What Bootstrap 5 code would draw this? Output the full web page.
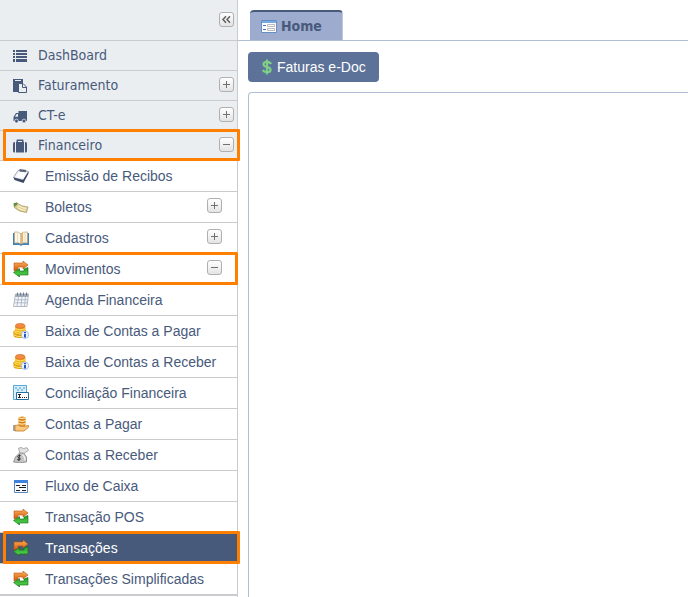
<!DOCTYPE html>
<html lang="pt-BR">
<head>
<meta charset="utf-8">
<meta name="viewport" content="width=device-width, initial-scale=1">
<title>Home - Financeiro</title>
<link href="https://cdn.jsdelivr.net/npm/bootstrap@5.3.0/dist/css/bootstrap.min.css" rel="stylesheet">
<style>
:root { --ink: #485a7b; --line: #c9cbce; --side: #ebeef1; --edge: #b1bfd6; --hl: #ff8000; }
body { font-family: "Liberation Sans", Arial, sans-serif; font-size: 14px; line-height: 20px; color: var(--ink); background: #fff; }
.sidebar { flex: 0 0 238px; border-right: 1px solid var(--line); }
.side-top { height: 41px; padding: 0 3px 2px; background: var(--side); border-bottom: 1px solid var(--line); }
.side-item { height: 30px; padding-right: 3px; background: var(--side); border-bottom: 1px solid var(--line); }
.side-item a { padding-left: 12px; gap: 10px; color: var(--ink); font-family: Tahoma, "DejaVu Sans Condensed", sans-serif; }
.side-item a span { padding-bottom: 2px; }
.sub-item { height: 31px; padding-right: 15px; background: #fff; border-bottom: 1px solid var(--line); }
.sub-item a { padding-left: 13px; gap: 16px; color: var(--ink); }
.sub-item.chosen { background: var(--ink); }
.sub-item.chosen a { color: #fff; }
.side-item svg, .sub-item svg { width: 16px; height: 16px; flex: none; }
.side-end { border-bottom: 1px solid var(--line); }
.marked::after { content: ""; position: absolute; inset: -2px -3px -1px 3px; border: 3px solid var(--hl); border-radius: 1px; pointer-events: none; z-index: 2; }
.marked.inner::after { inset: -2px -1px -1px 2px; }
.side-item .toggle, .sub-item .toggle, .toggle { width: 15px; height: 15px; padding: 0; border: 1px solid #b0b0b0; border-radius: 3px; background: linear-gradient(#fff, #e4e4e4); display: flex; align-items: center; justify-content: center; flex: none; }
.side-item .toggle svg, .sub-item .toggle svg, .toggle svg { width: 13px; height: 13px; display: block; }
.side-item .toggle { margin-bottom: 2px; }
.sub-item .toggle { margin-bottom: 4px; }
.tabbar { height: 41px; padding: 10px 12px 0; border-bottom: 1px solid var(--edge); }
.tab-home { height: 30px; padding: 0 20px 0 11px; gap: 4px; color: var(--ink); background: #9dabcf; border-top: 2px solid var(--ink); border-right: 1px solid #c0c6d8; border-radius: 4px 4px 0 0; font-family: Tahoma, "DejaVu Sans Condensed", sans-serif; }
.btn-doc { height: 30px; padding: 0 13px; gap: 4px; font-size: 14px; line-height: 20px; color: #fff; background: #5c7299; border: 0; border-radius: 4px; }
.btn-doc:hover { color: #fff; background: var(--ink); }
.content { padding: 11px 0 0 10px; }
.panel { margin-top: 10px; border: 1px solid var(--edge); border-right: 0; border-bottom: 0; border-top-left-radius: 4px; }
</style>
</head>
<body>
<svg class="position-absolute" width="0" height="0" aria-hidden="true">
  <defs>
    <linearGradient id="g-or" x1="0" y1="0" x2="0" y2="1"><stop offset="0" stop-color="#ffb35c"/><stop offset="1" stop-color="#d4560a"/></linearGradient>
    <linearGradient id="g-gr" x1="0" y1="0" x2="0" y2="1"><stop offset="0" stop-color="#1f9a24"/><stop offset=".7" stop-color="#4cc845"/><stop offset="1" stop-color="#128a1a"/></linearGradient>
  </defs>
  <symbol id="plus" viewBox="0 0 13 13"><path d="M3 6.5h7M6.500 3v7" stroke="#707070"/></symbol>
  <symbol id="minus" viewBox="0 0 13 13"><path d="M3 6.5h7" stroke="#707070"/></symbol>
  <symbol id="chev" viewBox="0 0 13 13"><path d="M6 3.300 3 6.500 6 9.700M10 3.300 7 6.500 10 9.700" fill="none" stroke="#606060" stroke-width="1.500"/></symbol>
  <symbol id="list" viewBox="0 0 16 16"><path fill="#485a7b" d="M1 2h2v2H1zM4 2h11v2H4zM1 5h2v2H1zM4 5h11v2H4zM1 8h2v2H1zM4 8h11v2H4zM1 11h2v3H1zM4 11h11v3H4z"/></symbol>
  <symbol id="paste" viewBox="0 0 16 16"><path fill="#485a7b" d="M1 1h10v5H6v8H1z"/><path d="M3 2.500h6" stroke="#ebeef1"/><path d="M6.500 5.500H11L14.500 9v5.500h-8z" fill="#ebeef1" stroke="#485a7b"/><path d="M10.500 5.500V9.500h4" fill="none" stroke="#485a7b"/></symbol>
  <symbol id="truck" viewBox="0 0 16 16"><path fill="#485a7b" d="M6.500 3H15v10H1.500V9L4 5h2.500z"/><path fill="#ebeef1" d="M3 8.700 4.700 6H6v2.700z"/><circle cx="4.500" cy="13" r="1.900" fill="#485a7b" stroke="#ebeef1" stroke-width=".7"/><circle cx="12" cy="13" r="1.900" fill="#485a7b" stroke="#ebeef1" stroke-width=".7"/></symbol>
  <symbol id="case" viewBox="0 0 16 16"><path fill="#485a7b" fill-rule="evenodd" d="M4.500 4V2.500q0-1 1-1h5q1 0 1 1V4h.5v10.500H4V4zM6 4h4V3H6zM3 4v10.500h-.5Q1 14.500 1 13V5.500Q1 4 2.500 4zM13 4v10.500h.5q1.500 0 1.500-1.500V5.500Q15 4 13.500 4z"/></symbol>
  <symbol id="receipt" viewBox="0 0 16 16"><path d="M5 2.500 15.500 3.500 10.500 12 .5 9.500z" fill="#f3f5fb" stroke="#8f98a8" stroke-width=".8"/><path d="M.5 9.500 10 12 15.500 3.500v2L10.500 15 1.500 12z" fill="#3d4964"/><path d="M3.500 9.300 6.500 4l6 .7-3 5.700z" fill="#fff"/><path d="M6.500 1 13.500 2l-1 2.200-6-.8z" fill="#5b6579"/></symbol>
  <symbol id="ticket" viewBox="0 0 16 16"><path d="M.8 4.500 4 4q4 3.500 11 4l-1.500 5.500Q6 13 1.300 8.500z" fill="#dccd93" stroke="#a5925a" stroke-width=".7"/><path d="M.8 4.500 4 3.500l.5 1.700L1.300 8z" fill="#5c8a48"/><path d="M5 6.500q3.500 2.500 8.500 3M4.500 8.500Q8 11 12.500 11.500" fill="none" stroke="#f6eec9" stroke-width="1.300"/></symbol>
  <symbol id="book" viewBox="0 0 16 16"><path d="M0 3h16v12H9.500L8 16l-1.500-1H0z" fill="#3f83bd"/><path d="M1.500 2q4.500-.7 6.500 2V14q-2-1.700-6.500-1z" fill="#fff8e8" stroke="#b9a079" stroke-width=".7"/><path d="M14.500 2Q10 1.300 8 4V14q2-1.700 6.500-1z" fill="#fff3dc" stroke="#b9a079" stroke-width=".7"/><path d="M8 4v10l2-1.600V1.500z" fill="#dfb67b"/><path d="M4.500 2.500v10M12 2.500v10" stroke="#e6d4b3" stroke-width=".8"/></symbol>
  <symbol id="swap" viewBox="0 0 16 16"><path d="M1 2h9V0l5 4-5 4V6H5v2.500L1 10z" fill="url(#g-or)" stroke="#b5500f" stroke-width=".6"/><path d="M15 14H6.500v2l-6-4.500 6-4V10H11V8l4-1.500z" fill="url(#g-gr)" stroke="#156b1b" stroke-width=".6"/></symbol>
  <symbol id="calendar" viewBox="0 0 16 16"><path d="M2.500 2h13L14 14.500H.5z" fill="#f6f7f9" stroke="#a0a8b4" stroke-width=".8"/><path d="M2.500 2h13L15 5H2z" fill="#a0abbc"/><path d="M2 7.800h12.500M1.500 10.800h12.500M5.500 5 4 14M9 5 8 14M12.500 5 11.500 14" stroke="#a3aec1" stroke-width=".8"/><path d="M4.500.5v3M7.500.5v3M10.500.5v3M13.500.5v3" stroke="#69727f" stroke-width=".9"/></symbol>
  <symbol id="coins" viewBox="0 0 16 16"><path d="M.5 9.500v3q0 2.500 6.500 2.500t7-2.500v-3z" fill="#e3a011"/><ellipse cx="7" cy="9.200" rx="6.500" ry="2.800" fill="#ffd23d" stroke="#c98a0c" stroke-width=".6"/><path d="M2 3.500v5q1 2 5.500 2t5-2v-5z" fill="#f0b31e"/><path d="M2 5.700q5.200 2.500 10.500 0M2 8q5.200 2.500 10.500 0M1 12q3 2 8 1.500" fill="none" stroke="#ffe167" stroke-width="1"/><ellipse cx="7.200" cy="2.900" rx="4.700" ry="2.300" fill="#f48b40" stroke="#d06a1c" stroke-width=".7"/><circle cx="12" cy="11.800" r="3.700" fill="#eef5ff" stroke="#8eb2e6" stroke-width=".8"/><path d="M12 9v1.300M12 11v3.500" stroke="#1446b8" stroke-width="1.800"/></symbol>
  <symbol id="form" viewBox="0 0 16 16"><path d="M.5.500h13v14H.5z" fill="#d9effb" stroke="#55a8d8"/><path d="M2 2h2v2H2zM6 2h2v2H6zM10 2h2v2h-2zM4 4h2v2H4zM8 4h2v2H8z" fill="#86c5e8"/><path d="M3.500 7.500h12v7h-12z" fill="#fff" stroke="#23709f"/><path d="M5 9.500h3M5 12.500h3M6.500 9.500v3M9 12.500h1M11 12.500h1M13 12.500h1" stroke="#222"/></symbol>
  <symbol id="hand" viewBox="0 0 16 16"><path d="M5.500 1.500q4-2 7 0v8.500h-7z" fill="#e3932b"/><path d="M5.500 1.700q3.500 1.700 7 0M5.500 4.500q3.500 1.700 7 0M5.500 7.300q3.500 1.700 7 0" fill="none" stroke="#ffdc92" stroke-width="1.100"/><path d="M5.500 3.200q3.500 1.700 7 0M5.500 6q3.500 1.700 7 0" fill="none" stroke="#b56811" stroke-width=".6"/><path d="M0 9h2v6H0z" fill="#9ea7b4"/><path d="M2 9.500 5 9l3 1.500h3l4.500-1 .3 1.500-4.800 4H2z" fill="#fbc77b" stroke="#c27b27" stroke-width=".8"/></symbol>
  <symbol id="bag" viewBox="0 0 16 16"><path d="M5.500 1.200 8 .5l2.500 1L14 .7l1.500 2.500L11 6.500H7z" fill="#e2e3e2" stroke="#8a8c8a" stroke-width=".7"/><path d="M6.500 6Q1.500 9.500.5 15q6 1.500 13 0Q15 9.500 10.500 6z" fill="#c3c5c3" stroke="#7b7d7b" stroke-width=".7"/><path d="M7.700 8.700q-2.700-.8-3 .8-.1 1.100 1.500 1.400 1.500.4 1 1.500-.8 1-3 .1M6.500 7.500l-.7 6.500" fill="none" stroke="#333"/><path d="M9.500 7.500q3 2.500 2.500 6" fill="none" stroke="#f0f0f0" stroke-width="1.300"/></symbol>
  <symbol id="flow" viewBox="0 0 16 16"><path d="M1.500 2.500h13v12h-13z" fill="#f8fbff" stroke="#5e86bd"/><path d="M1 2h14v3H1z" fill="#3f83dc"/><path d="M3 7.500h4M9 7.500h4M6 9.500h7M3 12.500h4M9 12.500h4" stroke="#222"/></symbol>
  <symbol id="window" viewBox="0 0 16 16"><path d="M.5 2.500h15v12H.5z" fill="#fdfdfd" stroke="#648fc6"/><path d="M1 3h14v2H1z" fill="#78a9e4"/><path d="M2 7.500h3M2 11.500h3" stroke="#3e73bd"/><path d="M6.500 6.500h7v2h-7zM6.500 10.500h7v2h-7z" fill="#fff" stroke="#aaa" stroke-width=".8"/></symbol>
  <symbol id="dollar" viewBox="0 0 12 16"><path d="M10 5Q9 2.800 6 2.800 2.500 2.800 2.500 5.200 2.500 7.300 6 8t3.600 2.700Q9.600 13.200 6 13.200 3 13.200 1.800 11M6 .5v15" fill="none" stroke="#7fcf86" stroke-width="2.200"/></symbol>
</svg>
<div class="d-flex min-vh-100">
  <nav class="sidebar" aria-label="Menu principal">
    <div class="side-top d-flex align-items-center justify-content-end"><button class="toggle" type="button" aria-label="Recolher menu"><svg><use href="#chev"/></svg></button></div>
    <div class="side-item d-flex align-items-center"><a class="d-flex align-items-center flex-grow-1 text-decoration-none" href="#"><svg><use href="#list"/></svg><span>DashBoard</span></a></div>
    <div class="side-item d-flex align-items-center"><a class="d-flex align-items-center flex-grow-1 text-decoration-none" href="#"><svg><use href="#paste"/></svg><span>Faturamento</span></a><button class="toggle" type="button" aria-label="Abrir Faturamento"><svg><use href="#plus"/></svg></button></div>
    <div class="side-item d-flex align-items-center"><a class="d-flex align-items-center flex-grow-1 text-decoration-none" href="#"><svg><use href="#truck"/></svg><span>CT-e</span></a><button class="toggle" type="button" aria-label="Abrir CT-e"><svg><use href="#plus"/></svg></button></div>
    <div class="side-item marked position-relative d-flex align-items-center"><a class="d-flex align-items-center flex-grow-1 text-decoration-none" href="#"><svg><use href="#case"/></svg><span>Financeiro</span></a><button class="toggle" type="button" aria-label="Fechar Financeiro"><svg><use href="#minus"/></svg></button></div>
    <div class="sub-item d-flex align-items-center"><a class="d-flex align-items-center flex-grow-1 text-decoration-none" href="#"><svg><use href="#receipt"/></svg>Emissão de Recibos</a></div>
    <div class="sub-item d-flex align-items-center"><a class="d-flex align-items-center flex-grow-1 text-decoration-none" href="#"><svg><use href="#ticket"/></svg>Boletos</a><button class="toggle" type="button" aria-label="Abrir Boletos"><svg><use href="#plus"/></svg></button></div>
    <div class="sub-item d-flex align-items-center"><a class="d-flex align-items-center flex-grow-1 text-decoration-none" href="#"><svg><use href="#book"/></svg>Cadastros</a><button class="toggle" type="button" aria-label="Abrir Cadastros"><svg><use href="#plus"/></svg></button></div>
    <div class="sub-item marked inner position-relative d-flex align-items-center"><a class="d-flex align-items-center flex-grow-1 text-decoration-none" href="#"><svg><use href="#swap"/></svg>Movimentos</a><button class="toggle" type="button" aria-label="Fechar Movimentos"><svg><use href="#minus"/></svg></button></div>
    <div class="sub-item d-flex align-items-center"><a class="d-flex align-items-center flex-grow-1 text-decoration-none" href="#"><svg><use href="#calendar"/></svg>Agenda Financeira</a></div>
    <div class="sub-item d-flex align-items-center"><a class="d-flex align-items-center flex-grow-1 text-decoration-none" href="#"><svg><use href="#coins"/></svg>Baixa de Contas a Pagar</a></div>
    <div class="sub-item d-flex align-items-center"><a class="d-flex align-items-center flex-grow-1 text-decoration-none" href="#"><svg><use href="#coins"/></svg>Baixa de Contas a Receber</a></div>
    <div class="sub-item d-flex align-items-center"><a class="d-flex align-items-center flex-grow-1 text-decoration-none" href="#"><svg><use href="#form"/></svg>Conciliação Financeira</a></div>
    <div class="sub-item d-flex align-items-center"><a class="d-flex align-items-center flex-grow-1 text-decoration-none" href="#"><svg><use href="#hand"/></svg>Contas a Pagar</a></div>
    <div class="sub-item d-flex align-items-center"><a class="d-flex align-items-center flex-grow-1 text-decoration-none" href="#"><svg><use href="#bag"/></svg>Contas a Receber</a></div>
    <div class="sub-item d-flex align-items-center"><a class="d-flex align-items-center flex-grow-1 text-decoration-none" href="#"><svg><use href="#flow"/></svg>Fluxo de Caixa</a></div>
    <div class="sub-item d-flex align-items-center"><a class="d-flex align-items-center flex-grow-1 text-decoration-none" href="#"><svg><use href="#swap"/></svg>Transação POS</a></div>
    <div class="sub-item chosen marked position-relative d-flex align-items-center"><a class="d-flex align-items-center flex-grow-1 text-decoration-none" href="#" aria-current="page"><svg><use href="#swap"/></svg>Transações</a></div>
    <div class="sub-item d-flex align-items-center"><a class="d-flex align-items-center flex-grow-1 text-decoration-none" href="#"><svg><use href="#swap"/></svg>Transações Simplificadas</a></div>
    <div class="side-end"></div>
  </nav>
  <main class="flex-grow-1 d-flex flex-column">
    <div class="tabbar d-flex"><a class="tab-home d-flex align-items-center fw-bold text-decoration-none" href="#"><svg width="16" height="16"><use href="#window"/></svg>Home</a></div>
    <div class="content flex-grow-1 d-flex flex-column">
      <div class="d-flex"><button class="btn btn-doc d-flex align-items-center" type="button"><svg width="12" height="16"><use href="#dollar"/></svg>Faturas e-Doc</button></div>
      <section class="panel flex-grow-1" aria-label="Conteúdo"></section>
    </div>
  </main>
</div>
<script src="https://cdn.jsdelivr.net/npm/bootstrap@5.3.0/dist/js/bootstrap.bundle.min.js"></script>
</body>
</html>
